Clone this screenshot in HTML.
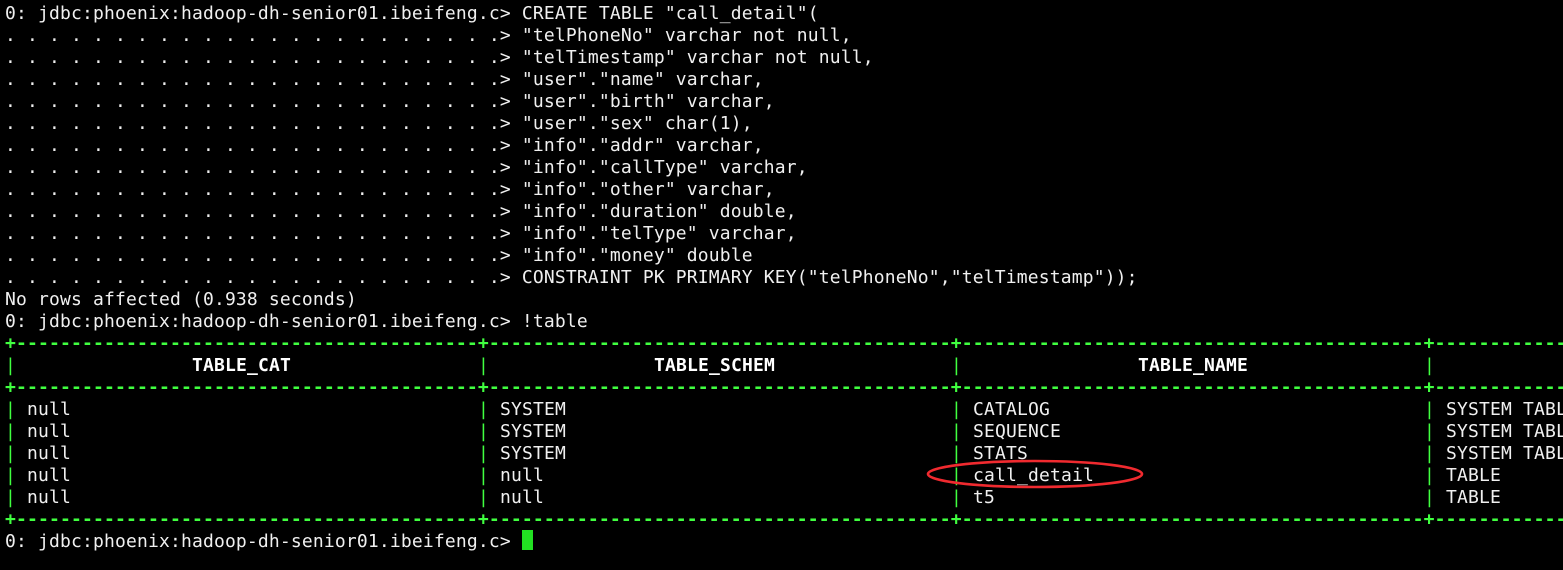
<!DOCTYPE html>
<html><head><meta charset="utf-8"><style>
html,body{margin:0;padding:0;background:#000;width:1563px;height:570px;overflow:hidden}
.l{position:absolute;white-space:pre;font-family:"DejaVu Sans Mono","Liberation Mono",monospace;font-size:18px;letter-spacing:0.16px;line-height:22px;color:#f0f0f0}
.g{color:#40ff40}
.d{font-weight:bold}
b{font-weight:bold;color:#fff}
</style></head><body>
<div class="l" style="left:5px;top:3px">0: jdbc:phoenix:hadoop-dh-senior01.ibeifeng.c&gt; CREATE TABLE "call_detail"(
. . . . . . . . . . . . . . . . . . . . . . .&gt; "telPhoneNo" varchar not null,
. . . . . . . . . . . . . . . . . . . . . . .&gt; "telTimestamp" varchar not null,
. . . . . . . . . . . . . . . . . . . . . . .&gt; "user"."name" varchar,
. . . . . . . . . . . . . . . . . . . . . . .&gt; "user"."birth" varchar,
. . . . . . . . . . . . . . . . . . . . . . .&gt; "user"."sex" char(1),
. . . . . . . . . . . . . . . . . . . . . . .&gt; "info"."addr" varchar,
. . . . . . . . . . . . . . . . . . . . . . .&gt; "info"."callType" varchar,
. . . . . . . . . . . . . . . . . . . . . . .&gt; "info"."other" varchar,
. . . . . . . . . . . . . . . . . . . . . . .&gt; "info"."duration" double,
. . . . . . . . . . . . . . . . . . . . . . .&gt; "info"."telType" varchar,
. . . . . . . . . . . . . . . . . . . . . . .&gt; "info"."money" double
. . . . . . . . . . . . . . . . . . . . . . .&gt; CONSTRAINT PK PRIMARY KEY("telPhoneNo","telTimestamp"));
No rows affected (0.938 seconds)
0: jdbc:phoenix:hadoop-dh-senior01.ibeifeng.c&gt; !table</div>

<div class="l g d" style="left:5px;top:333px">+------------------------------------------+------------------------------------------+------------------------------------------+------------------</div>
<div class="l g d" style="left:5px;top:377px">+------------------------------------------+------------------------------------------+------------------------------------------+------------------</div>
<div class="l g d" style="left:5px;top:509px">+------------------------------------------+------------------------------------------+------------------------------------------+------------------</div>

<div class="l g" style="left:5px;top:355px">|</div>
<div class="l g" style="left:478px;top:355px">|</div>
<div class="l g" style="left:951px;top:355px">|</div>
<div class="l g" style="left:1424px;top:355px">|</div>
<div class="l" style="left:192px;top:355px"><b>TABLE_CAT</b></div>
<div class="l" style="left:654px;top:355px"><b>TABLE_SCHEM</b></div>
<div class="l" style="left:1138px;top:355px"><b>TABLE_NAME</b></div>

<div class="l g" style="left:5px;top:399px">|
|
|
|
|</div>
<div class="l g" style="left:478px;top:399px">|
|
|
|
|</div>
<div class="l g" style="left:951px;top:399px">|
|
|
|
|</div>
<div class="l g" style="left:1424px;top:399px">|
|
|
|
|</div>
<div class="l" style="left:27px;top:399px">null
null
null
null
null</div>
<div class="l" style="left:500px;top:399px">SYSTEM
SYSTEM
SYSTEM
null
null</div>
<div class="l" style="left:973px;top:399px">CATALOG
SEQUENCE
STATS
call_detail
t5</div>
<div class="l" style="left:1446px;top:399px">SYSTEM TABLE
SYSTEM TABLE
SYSTEM TABLE
TABLE
TABLE</div>

<svg style="position:absolute;left:0;top:0" width="1563" height="570">
<ellipse cx="1035" cy="474" rx="107" ry="13" fill="none" stroke="#f02a2f" stroke-width="2.6"/>
<rect x="522" y="530" width="11" height="20" fill="#22e022"/>
</svg>
<div class="l" style="left:5px;top:531px">0: jdbc:phoenix:hadoop-dh-senior01.ibeifeng.c&gt; </div>
</body></html>
